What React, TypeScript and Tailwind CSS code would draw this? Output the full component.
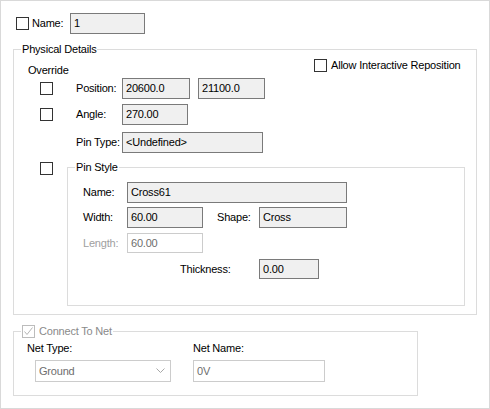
const font = { fontFamily: '"Liberation Sans", Arial, sans-serif' };

const Box = ({ disabled, checked }: { disabled?: boolean; checked?: boolean }) => (
  <span
    className={
      "flex h-[13px] w-[13px] shrink-0 items-center justify-center border bg-white " +
      (disabled ? "border-[#bcbcbc]" : "border-[#333333]")
    }
  >
    {checked && (
      <svg width="11" height="11" viewBox="0 0 11 11">
        <polyline points="1.5,5.5 4,8.5 9.5,1.5" fill="none" stroke="#b5b5b5" strokeWidth="1" />
      </svg>
    )}
  </span>
);

const Field = ({ value, w, h = "h-[21px]", disabled }: { value: string; w: string; h?: string; disabled?: boolean }) => (
  <div
    className={
      "flex shrink-0 items-center border px-[3px] leading-none " +
      w +
      " " +
      h +
      (disabled ? " border-[#cccccc] bg-white text-[#6d6d6d]" : " border-[#7a7a7a] bg-[#f0f0f0] text-black")
    }
  >
    {value}
  </div>
);

export default function App() {
  return (
    <div className="h-[409px] w-[490px] bg-white text-[11px] tracking-[-0.2px] text-black" style={font}>
      <div className="h-[409px] w-[490px] border border-[#d9d9d9] pl-[12px] pt-[12px]">
        {/* Name */}
        <div className="flex h-[21px] items-center">
          <span className="ml-[3px]">
            <Box />
          </span>
          <span className="ml-[3px] w-[38px]">Name:</span>
          <Field value="1" w="w-[75px]" />
        </div>

        {/* Physical Details */}
        <div className="relative mt-[15px] h-[266px] w-[464px] border border-[#dcdcdc]">
          <span className="absolute -top-[8px] left-[7px] bg-white px-[1px] leading-[15px]">Physical Details</span>
          <div className="flex pt-[9px]">
            <div className="mt-[4px] w-[300px] pl-[14px] leading-[15px]">Override</div>
            <label className="flex h-[13px] items-center gap-[4px] whitespace-nowrap">
              <Box />
              <span>Allow Interactive Reposition</span>
            </label>
          </div>

          <div className="flex h-[21px] items-center pl-[26px]">
            <Box />
            <span className="ml-[23px] w-[46px]">Position:</span>
            <Field value="20600.0" w="w-[68px]" />
            <span className="ml-[8px]">
              <Field value="21100.0" w="w-[67px]" />
            </span>
          </div>

          <div className="mt-[5px] flex h-[21px] items-center pl-[26px]">
            <Box />
            <span className="ml-[23px] w-[46px]">Angle:</span>
            <Field value="270.00" w="w-[66px]" />
          </div>

          <div className="mt-[7px] flex h-[21px] items-center pl-[62px]">
            <span className="w-[46px] whitespace-nowrap">Pin Type:</span>
            <Field value="<Undefined>" w="w-[141px]" />
          </div>

          <div className="flex items-start pl-[26px]">
            <span className="mt-[9px]">
              <Box />
            </span>
            <div className="relative ml-[14px] mt-[14px] h-[139px] w-[398px] border border-[#dcdcdc]">
              <span className="absolute -top-[8px] left-[7px] bg-white px-[1px] leading-[15px]">Pin Style</span>
              <div className="pl-[15px] pt-[14px]">
                <div className="flex h-[21px] items-center">
                  <span className="w-[44px]">Name:</span>
                  <Field value="Cross61" w="w-[220px]" />
                </div>
                <div className="mt-[4px] flex h-[21px] items-center">
                  <span className="w-[44px]">Width:</span>
                  <Field value="60.00" w="w-[76px]" />
                  <span className="ml-[14px] w-[42px]">Shape:</span>
                  <Field value="Cross" w="w-[88px]" />
                </div>
                <div className="mt-[5px] flex h-[20px] items-center">
                  <span className="w-[44px] text-[#a0a0a0]">Length:</span>
                  <Field value="60.00" w="w-[76px]" h="h-[20px]" disabled />
                </div>
                <div className="mt-[6px] flex h-[20px] items-center">
                  <span className="ml-[97px] w-[79px]">Thickness:</span>
                  <Field value="0.00" w="w-[60px]" h="h-[20px]" />
                </div>
              </div>
            </div>
          </div>
        </div>

        {/* Connect To Net */}
        <div className="relative mt-[16px] h-[65px] w-[405px] border border-[#dcdcdc]">
          <label className="absolute -top-[8px] left-[7px] flex items-center gap-[4px] bg-white px-[1px] leading-[15px] text-[#8a8a8a]">
            <Box disabled checked />
            <span>Connect To Net</span>
          </label>
          <div className="flex pl-[13px] pt-[9px] leading-[15px]">
            <span className="w-[166px]">Net Type:</span>
            <span>Net Name:</span>
          </div>
          <div className="mt-[4px] flex items-center pl-[21px]">
            <div className="flex h-[22px] w-[136px] items-center justify-between border border-[#cccccc] bg-white pl-[3px] pr-[5px] text-[#6d6d6d]">
              <span>Ground</span>
              <svg width="9" height="6" viewBox="0 0 9 6">
                <polyline points="0.5,0.5 4.5,4.5 8.5,0.5" fill="none" stroke="#a8a8a8" strokeWidth="1" />
              </svg>
            </div>
            <span className="ml-[22px]">
              <Field value="0V" w="w-[132px]" h="h-[22px]" disabled />
            </span>
          </div>
        </div>
      </div>
    </div>
  );
}
